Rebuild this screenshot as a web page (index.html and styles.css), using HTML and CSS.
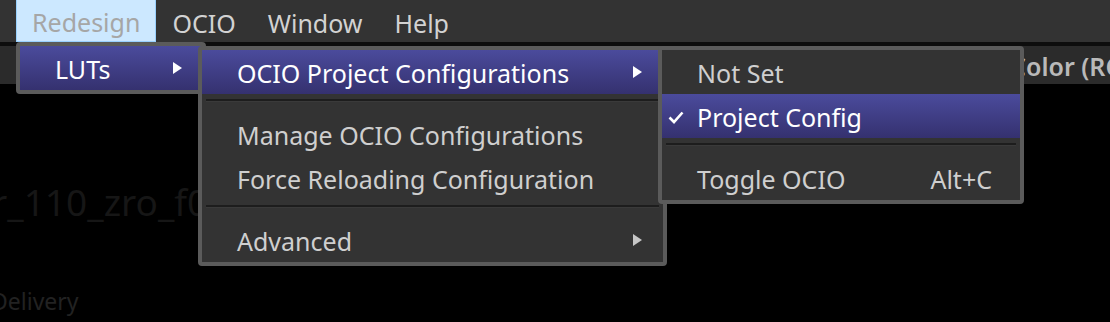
FILE: index.html
```html
<!DOCTYPE html>
<html lang="en">
<head>
    <meta charset="UTF-8">
    <meta name="viewport" content="width=device-width, initial-scale=1.0">
    <title>OCIO menu</title>
    <link rel="stylesheet" href="styles.css">
</head>
<body>
    <div class="menubar">
        <div class="menubar-item active">Redesign</div>
        <div class="menubar-item">OCIO</div>
        <div class="menubar-item">Window</div>
        <div class="menubar-item">Help</div>
    </div>
    <div class="toolbar">
        <div></div>
        <div class="toolbar-label">Color (RGBA)</div>
    </div>
    <div class="workspace">
        <div class="clip-name">r_110_zro_f010</div>
        <div class="clip-meta">Delivery</div>
    </div>

    <!-- open menus -->
    <div class="menu menu-luts">
        <div class="item hl">
            <span class="mark"></span>
            <span class="label">LUTs</span>
            <span class="arrow"></span>
        </div>
    </div>

    <div class="menu menu-ocio">
        <div class="item hl">
            <span class="mark"></span>
            <span class="label">OCIO Project Configurations</span>
            <span class="arrow"></span>
        </div>
        <div class="sep"></div>
        <div class="item">
            <span class="mark"></span>
            <span class="label">Manage OCIO Configurations</span>
        </div>
        <div class="item">
            <span class="mark"></span>
            <span class="label">Force Reloading Configuration</span>
        </div>
        <div class="sep"></div>
        <div class="item">
            <span class="mark"></span>
            <span class="label">Advanced</span>
            <span class="arrow"></span>
        </div>
    </div>

    <div class="menu menu-config">
        <div class="item">
            <span class="mark"></span>
            <span class="label">Not Set</span>
        </div>
        <div class="item hl">
            <span class="mark">
                <svg width="20" height="14" viewBox="0 0 20 14"><polyline points="1.5,6.5 6,11 14.5,1.5" fill="none" stroke="#fff" stroke-width="2.6"/></svg>
            </span>
            <span class="label">Project Config</span>
        </div>
        <div class="sep"></div>
        <div class="item">
            <span class="mark"></span>
            <span class="label">Toggle OCIO</span>
            <span class="shortcut">Alt+C</span>
        </div>
    </div>
</body>
</html>
```

FILE: styles.css
```css
body {
    margin: 0;
    background-color: #000;
    font-family: "Noto Sans", "Open Sans", sans-serif;
    font-size: 25px;
    color: #cfcfcf;
    overflow: hidden;
}
.menubar {
    display: flex;
    height: 42px;
    padding-left: 16px;
    background-color: #333;
}
.menubar-item {
    height: 42px;
    line-height: 46px;
    padding: 0 16px;
    box-sizing: border-box;
    color: #d2d2d2;
}
.menubar-item.active {
    background-color: #cce8ff;
    border: 1px solid #99d1ff;
    border-top: none;
    line-height: 45px;
    padding: 0 15px;
    color: #a6a6a6;
}
.toolbar {
    display: grid;
    grid-template-columns: 1010px 1fr;
    height: 38px;
    border-top: 4px solid #0d0d0d;
    background-color: #2b2b2b;
    overflow: hidden;
}
.toolbar-label {
    font-size: 25px;
    font-weight: 600;
    line-height: 40px;
    color: #b9b9b9;
    white-space: nowrap;
}
.workspace {
    height: 238px;
    overflow: hidden;
}
.clip-name {
    margin: 99px 0 0 -8px;
    font-size: 37px;
    line-height: 1;
    color: #161616;
    white-space: nowrap;
}
.clip-meta {
    margin: 70px 0 0 -9px;
    font-size: 23px;
    line-height: 1;
    color: #222;
}

/* popup menus */
.menu {
    position: absolute;
    box-sizing: border-box;
    background-color: #333;
    border: 4px solid #5b5b5b;
    border-radius: 4px;
}
.menu-luts {
    left: 16px;
    top: 42px;
    width: 190px;
}
.menu-ocio {
    left: 198px;
    top: 46px;
    width: 469px;
}
.menu-config {
    left: 658px;
    top: 46px;
    width: 366px;
}
.item {
    display: flex;
    align-items: center;
    height: 44px;
    box-sizing: border-box;
    padding-top: 3px;
    line-height: 41px;
    white-space: nowrap;
}
.item.hl {
    background: linear-gradient(#4b4b9c, #35316f);
    color: #fff;
}
.mark {
    display: flex;
    align-items: center;
    width: 35px;
    height: 38px;
    flex-shrink: 0;
}
.mark svg {
    margin-left: 6px;
}
.label {
    flex: 1;
}
.arrow {
    width: 0;
    height: 0;
    margin: -3px 21px 0 0;
    border-top: 6px solid transparent;
    border-bottom: 6px solid transparent;
    border-left: 9px solid #c6c6c6;
}
.hl .arrow {
    border-left-color: #fff;
}
.menu-luts .arrow {
    margin-right: 20px;
}
.shortcut {
    margin-right: 28px;
}
.sep {
    margin: 5px 4px 10px;
    border-top: 2px solid #1d1d1d;
    border-bottom: 1px solid #3a3a3a;
}
```
